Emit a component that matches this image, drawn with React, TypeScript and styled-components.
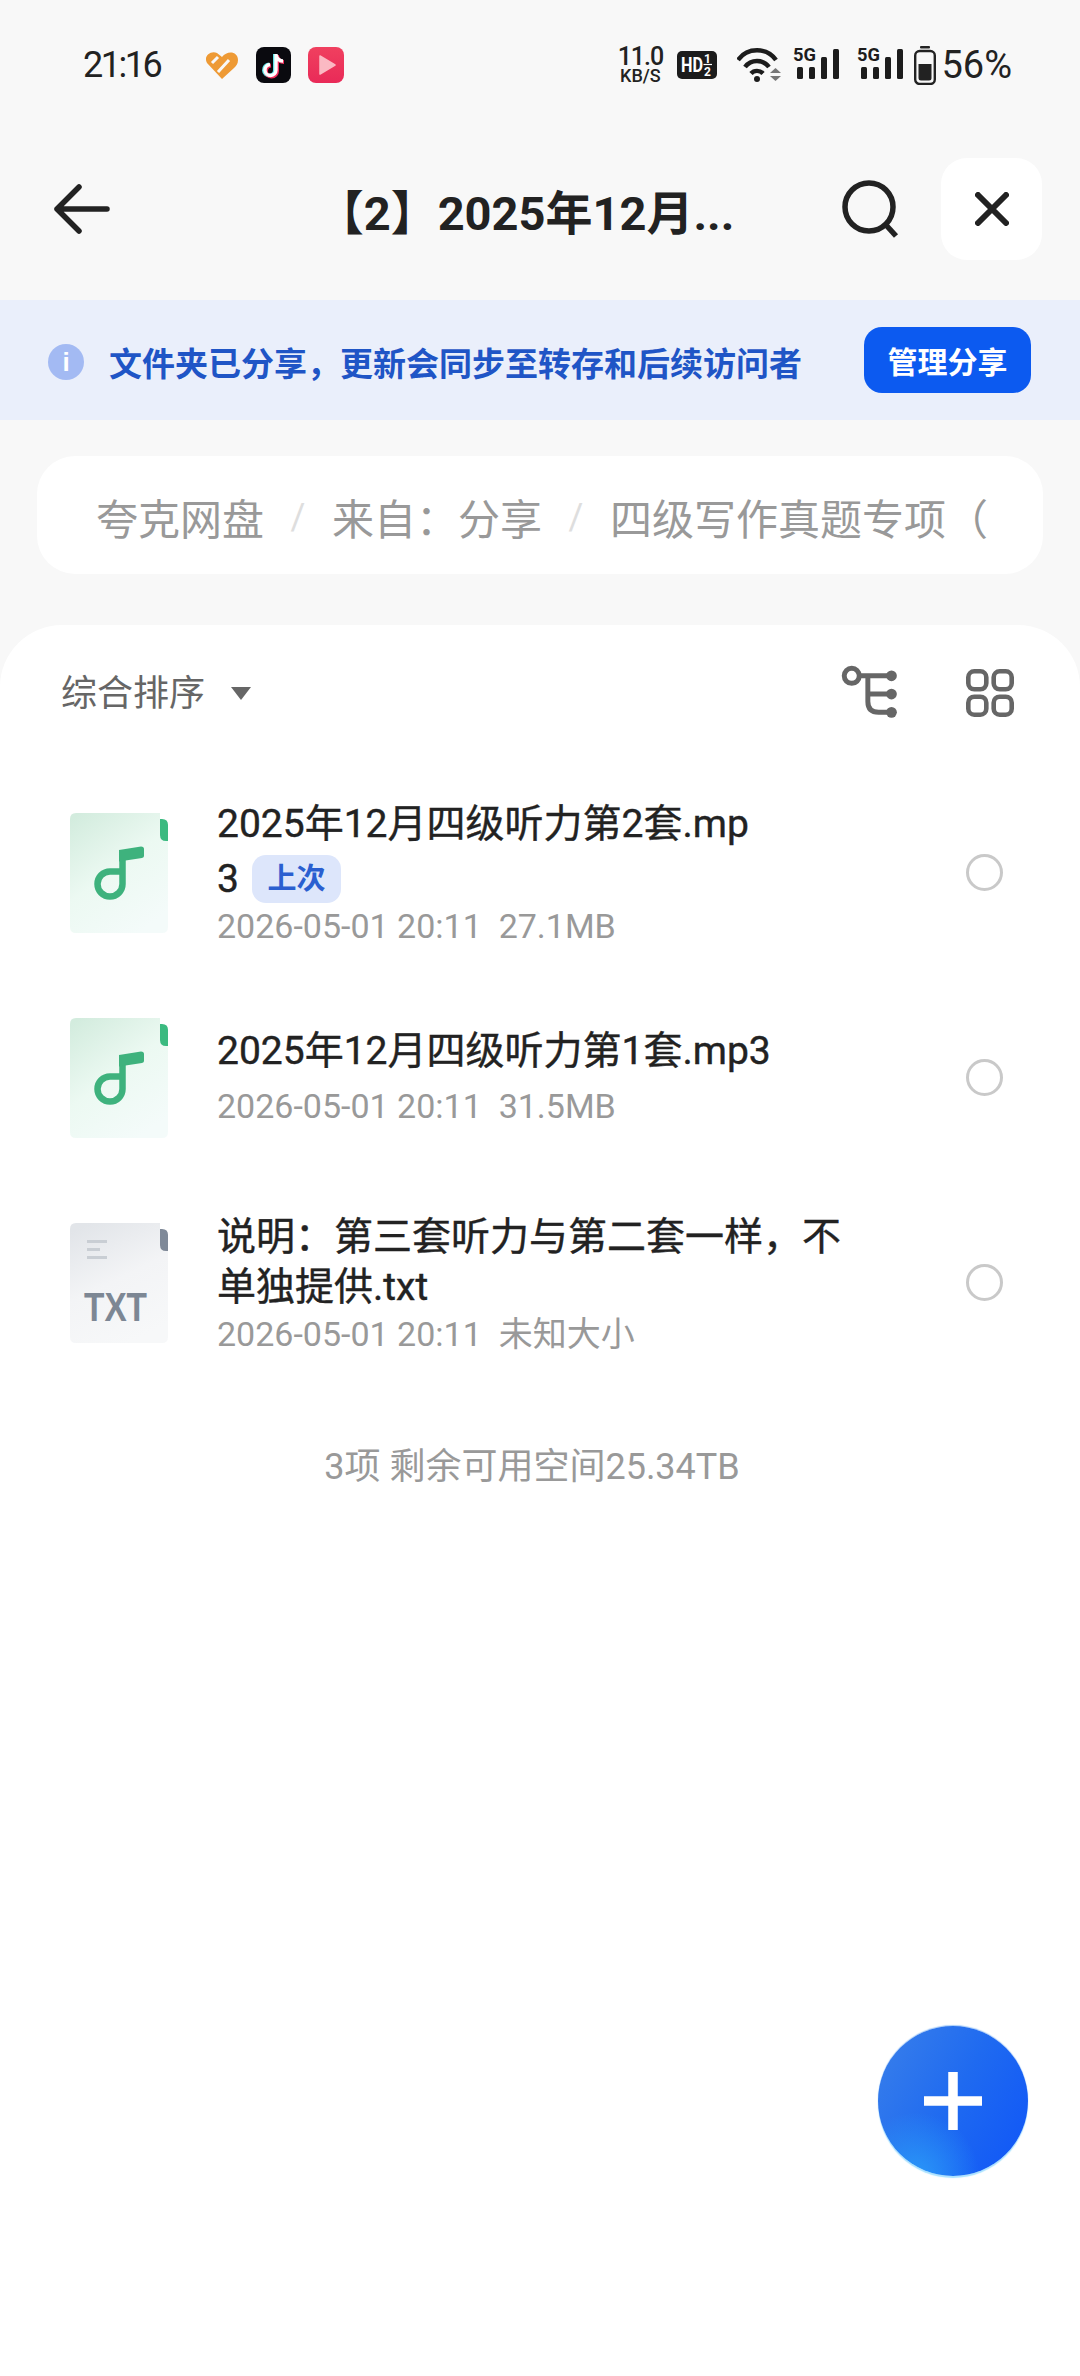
import React from 'react';
import styled, { createGlobalStyle } from 'styled-components';

const GlobalStyle = createGlobalStyle`
  html, body {
    margin: 0;
    padding: 0;
    background: #f8f8f8;
  }
  * {
    box-sizing: border-box;
  }
`;

const Page = styled.div`
  position: relative;
  width: 1080px;
  height: 2376px;
  overflow: hidden;
  display: flex;
  flex-direction: column;
  background: #f8f8f8;
  font-family: Roboto, 'Noto Sans CJK SC', sans-serif;
  color: #222;
`;

const StatusBar = styled.div`
  height: 130px;
  flex: none;
  display: flex;
  align-items: center;
  padding: 0 68px 0 83px;
`;

const Time = styled.span`
  width: 80px;
  font-size: 36px;
  letter-spacing: -2.5px;
  color: #222;
  white-space: nowrap;
`;

const AppIcons = styled.div`
  display: flex;
  align-items: center;
  margin-left: 42px;
  gap: 17px;
  flex: 1;
`;

const StatusItem = styled.div<{ $gap: number }>`
  display: flex;
  align-items: center;
  margin-left: ${(p) => p.$gap}px;
`;

const Speed = styled.div`
  width: 46px;
  display: flex;
  flex-direction: column;
  align-items: center;
  color: #222;
  font-weight: 500;
`;

const SpeedValue = styled.span`
  font-size: 25px;
  letter-spacing: -1px;
  line-height: 22px;
`;

const SpeedUnit = styled.span`
  font-size: 18px;
  line-height: 16px;
`;

const Battery = styled.span`
  font-size: 38px;
  color: #222;
`;

const Header = styled.div`
  height: 170px;
  flex: none;
  display: flex;
  align-items: center;
  padding: 0 38px 12px 52px;
`;

const BackButton = styled.div`
  width: 60px;
  display: flex;
`;

const Title = styled.h1`
  flex: 1;
  margin: 0;
  padding-left: 98px;
  text-align: center;
  font-size: 47px;
  font-weight: 700;
  color: #222;
  white-space: nowrap;
`;

const SearchButton = styled.div`
  display: flex;
  margin-right: 42px;
`;

const CloseButton = styled.div`
  width: 101px;
  height: 102px;
  border-radius: 26px;
  background: #fff;
  display: flex;
  align-items: center;
  justify-content: center;
`;

const Banner = styled.div`
  height: 120px;
  flex: none;
  display: flex;
  align-items: center;
  padding: 0 49px 0 48px;
  background: #eaeffb;
`;

const InfoDot = styled.div`
  width: 36px;
  height: 36px;
  border-radius: 50%;
  background: #a3baf3;
  color: #fff;
  display: flex;
  align-items: center;
  justify-content: center;
  font-size: 26px;
  font-weight: 700;
  font-family: 'Liberation Sans', sans-serif;
  margin-top: 4px;
`;

const BannerText = styled.span`
  flex: 1;
  margin: 4px 0 0 25px;
  font-size: 33px;
  font-weight: 700;
  color: #1f55c6;
  white-space: nowrap;
`;

const ManageButton = styled.button`
  width: 167px;
  height: 66px;
  border: none;
  border-radius: 18px;
  background: #0c5af0;
  color: #fff;
  font-family: inherit;
  font-size: 30px;
  font-weight: 700;
  padding: 0;
`;

const Breadcrumb = styled.div`
  height: 118px;
  flex: none;
  margin: 36px 37px 0 37px;
  border-radius: 38px;
  background: #fff;
  display: flex;
  align-items: center;
  padding: 3px 0 0 59px;
  font-size: 42px;
  color: #999;
  white-space: nowrap;
  overflow: hidden;
`;

const Crumb = styled.span``;

const CrumbSlash = styled.span`
  width: 68px;
  text-align: center;
  font-size: 36px;
  color: #dedede;
`;

const Sheet = styled.div`
  flex: 1;
  margin-top: 51px;
  background: #fff;
  border-radius: 62px 62px 0 0;
  display: flex;
  flex-direction: column;
`;

const Toolbar = styled.div`
  height: 145px;
  flex: none;
  display: flex;
  align-items: center;
  padding: 0 66px 9px 61px;
`;

const SortLabel = styled.span`
  margin-bottom: 6px;
  font-size: 36px;
  color: #666;
`;

const SortCaret = styled.span`
  width: 0;
  height: 0;
  margin: 1px 0 0 26px;
  border-style: solid;
  border-width: 13px 10px 0 10px;
  border-color: #666 transparent transparent transparent;
  flex: 1;
  max-width: 20px;
`;

const ToolbarIcons = styled.div`
  margin-left: auto;
  display: flex;
  align-items: center;
  gap: 67px;
`;

const FileRow = styled.div`
  height: 205px;
  flex: none;
  display: flex;
  align-items: center;
  padding: 0 77px 0 70px;
`;

const FileText = styled.div<{ $lift?: number }>`
  flex: 1;
  margin-left: 49px;
  padding-bottom: ${(p) => p.$lift ?? 0}px;
`;

const FileName = styled.div`
  font-size: 39px;
  -webkit-text-stroke: 0.4px #222;
  line-height: 50px;
  color: #222;
  white-space: nowrap;
`;

const NameLine = styled.div<{ $tall?: boolean }>`
  display: flex;
  align-items: center;
  height: ${(p) => (p.$tall ? 60 : 50)}px;
`;

const LastBadge = styled.span`
  width: 89px;
  height: 48px;
  margin-left: 13px;
  border-radius: 14px;
  background: #dde6fb;
  color: #2a5fd0;
  -webkit-text-stroke: 0;
  font-size: 29px;
  font-weight: 700;
  line-height: 48px;
  text-align: center;
`;

const FileMeta = styled.div<{ $gap: number }>`
  margin-top: ${(p) => p.$gap}px;
  font-size: 34px;
  line-height: 40px;
  color: #999;
  white-space: pre;
`;

const Radio = styled.div`
  width: 37px;
  height: 37px;
  flex: none;
  border-radius: 50%;
  border: 3px solid #c9c9c9;
`;

const Summary = styled.div`
  margin-top: 62px;
  padding-right: 16px;
  text-align: center;
  font-size: 36px;
  line-height: 40px;
  color: #999;
`;

const Fab = styled.div`
  position: absolute;
  left: 878px;
  top: 2026px;
  width: 150px;
  height: 150px;
  border-radius: 50%;
  background:
    radial-gradient(circle at 25% 100%, #2a98f8 0%, rgba(42, 152, 248, 0) 34%),
    linear-gradient(120deg, #3a80ea 0%, #1f6af0 50%, #0f55f8 100%);
  box-shadow: 0 2px 1px #a9e2ff, 0 -1px 1px #a8cdf8;
  display: flex;
  align-items: center;
  justify-content: center;
`;

const HeartIcon = () => (
  <svg width="34" height="30" viewBox="0 0 34 30">
    <path d="M17 29 L2 13 C-2 6 6 0 12 3 L17 7 C22 0 33 1 33 10 C33 14 31 16 29 18 Z" fill="#ee9a35" />
    <path d="M7 13 L13 7 M13 22 L24 10" stroke="#f8f8f8" strokeWidth="3" fill="none" />
  </svg>
);

const TikTokIcon = () => (
  <svg width="35" height="36" viewBox="0 0 35 36">
    <rect width="35" height="36" rx="8" fill="#0a0a0f" />
    <path d="M20 7 V23 A5.5 5.5 0 1 1 14 17.5 M20 8 C21 12 24 14 27 14" fill="none" stroke="#5fe6e8" strokeWidth="4" transform="translate(-1 0)" />
    <path d="M20 7 V23 A5.5 5.5 0 1 1 14 17.5 M20 8 C21 12 24 14 27 14" fill="none" stroke="#f0305c" strokeWidth="4" transform="translate(1 1)" />
    <path d="M20 7 V23 A5.5 5.5 0 1 1 14 17.5 M20 8 C21 12 24 14 27 14" fill="none" stroke="#fff" strokeWidth="3.4" />
  </svg>
);

const PlayIcon = () => (
  <svg width="36" height="36" viewBox="0 0 36 36">
    <defs>
      <linearGradient id="playBg" x1="0" y1="0" x2="0" y2="1">
        <stop offset="0" stopColor="#f0405f" />
        <stop offset="1" stopColor="#e92a58" />
      </linearGradient>
    </defs>
    <rect width="36" height="36" rx="8" fill="url(#playBg)" />
    <path d="M12 9 L27 18 L12 27 Z" fill="#fbb9c3" stroke="#fbb9c3" strokeWidth="1.5" strokeLinejoin="round" />
  </svg>
);

const HdIcon = () => (
  <svg width="40" height="28" viewBox="0 0 40 28">
    <rect width="40" height="28" rx="5" fill="#1c1c1c" />
    <text x="4" y="21" fontFamily="Roboto, sans-serif" fontWeight="700" fontSize="20" fill="#fff" textLength="22" lengthAdjust="spacingAndGlyphs">HD</text>
    <text x="27" y="12" fontFamily="Roboto, sans-serif" fontWeight="700" fontSize="12" fill="#fff">1</text>
    <text x="27" y="25" fontFamily="Roboto, sans-serif" fontWeight="700" fontSize="12" fill="#fff">2</text>
    <path d="M26.5 13.5 H35" stroke="#fff" strokeWidth="1.2" />
  </svg>
);

const WifiIcon = () => (
  <svg width="44" height="36" viewBox="0 0 44 36">
    <g fill="none" stroke="#1c1c1c" strokeWidth="4.4">
      <path d="M1 13 C10 0 30 0 39 13" />
      <path d="M8 20 C14 12 26 12 32 20" />
      <path d="M14 26.5 C17 23 23 23 26 26.5" />
    </g>
    <circle cx="20" cy="32" r="3" fill="#1c1c1c" />
    <path d="M33 26 L38.5 21 L44 26 Z" fill="#777" />
    <path d="M33 29 H44 L38.5 34 Z" fill="#777" />
  </svg>
);

const SignalIcon = () => (
  <svg width="47" height="46" viewBox="0 -4 47 46">
    <text x="0" y="15" fontFamily="Roboto, sans-serif" fontWeight="700" fontSize="19" fill="#1c1c1c" textLength="23" lengthAdjust="spacingAndGlyphs">5G</text>
    <rect x="4" y="21" width="6" height="12" rx="1.5" fill="#1c1c1c" />
    <rect x="16" y="21" width="6" height="12" rx="1.5" fill="#1c1c1c" />
    <rect x="28" y="11" width="6" height="22" rx="1.5" fill="#1c1c1c" />
    <rect x="40" y="3" width="6" height="30" rx="1.5" fill="#1c1c1c" />
  </svg>
);

const BatteryIcon = () => (
  <svg width="22" height="39" viewBox="0 0 22 39">
    <rect x="6" y="0" width="10" height="2.4" rx="1" fill="#222" />
    <rect x="1.2" y="5" width="19.6" height="33" rx="4.5" fill="none" stroke="#222" strokeWidth="2.4" />
    <path d="M4.5 18 H17.5 V32 a2.5 2.5 0 0 1 -2.5 2.5 H7 a2.5 2.5 0 0 1 -2.5 -2.5 Z" fill="#222" />
  </svg>
);

const BackIcon = () => (
  <svg width="58" height="50" viewBox="0 0 58 50">
    <path d="M27 3 L5 25 L27 47 M5 25 H55" fill="none" stroke="#222" strokeWidth="5.5" strokeLinecap="round" strokeLinejoin="round" />
  </svg>
);

const SearchIcon = () => (
  <svg width="58" height="58" viewBox="0 0 58 58">
    <circle cx="28" cy="27" r="24" fill="none" stroke="#222" strokeWidth="5.5" />
    <path d="M45 45 L55 56" stroke="#222" strokeWidth="5.5" />
  </svg>
);

const CloseIcon = () => (
  <svg width="34" height="34" viewBox="0 0 34 34">
    <path d="M3 3 L31 31 M31 3 L3 31" stroke="#222" strokeWidth="6" strokeLinecap="round" />
  </svg>
);

const TreeIcon = () => (
  <svg width="58" height="56" viewBox="0 0 54 52">
    <circle cx="10" cy="10" r="7" fill="none" stroke="#666" strokeWidth="4.6" />
    <path d="M17 10 H48 M25 10 V34 Q25 44 35 44 H48 M25 27 H48" fill="none" stroke="#666" strokeWidth="4.6" />
    <circle cx="47" cy="10" r="5" fill="#666" />
    <circle cx="47" cy="27" r="5" fill="#666" />
    <circle cx="47" cy="44" r="5" fill="#666" />
  </svg>
);

const GridIcon = () => (
  <svg width="48" height="48" viewBox="0 0 48 48">
    <g fill="none" stroke="#666" strokeWidth="4.6">
      <rect x="2.3" y="2.3" width="18" height="18" rx="6" />
      <rect x="27.7" y="2.3" width="18" height="18" rx="6" />
      <rect x="2.3" y="27.7" width="18" height="18" rx="6" />
      <rect x="27.7" y="27.7" width="18" height="18" rx="6" />
    </g>
  </svg>
);

const PlusIcon = () => (
  <svg width="58" height="58" viewBox="0 0 58 58">
    <path d="M29 0 V58 M0 29 H58" stroke="#fff" strokeWidth="9.5" />
  </svg>
);

const SHEET_PATH = 'M6 0 H90 V22 Q90 28 96 28 H98 V114 Q98 120 92 120 H6 Q0 120 0 114 V6 Q0 0 6 0 Z';

const MusicFileIcon: React.FC<{ id: string }> = ({ id }) => (
  <svg width="98" height="120" viewBox="0 0 98 120" style={{ flex: 'none' }}>
    <defs>
      <linearGradient id={id} x1="0.1" y1="0" x2="0.7" y2="1">
        <stop offset="0" stopColor="#d3ecde" />
        <stop offset="0.5" stopColor="#ecf9f2" />
        <stop offset="1" stopColor="#f4fbfa" />
      </linearGradient>
    </defs>
    <path d={SHEET_PATH} fill={`url(#${id})`} />
    <path d="M90 6 H92 Q98 6 98 12 V28 H96 Q90 28 90 22 Z" fill="#3bba80" />
    <path d="M52.5 40 V71 A12.5 12.5 0 1 1 40 58.5 H52.5" fill="none" stroke="#3eb27d" strokeWidth="6.5" strokeLinejoin="round" />
    <path d="M49 37 L71 33.5 Q74 33.5 74 36 V43 Q74 44.5 72 45 L49 48.5 Z" fill="#3eb27d" />
  </svg>
);

const TextFileIcon = () => (
  <svg width="98" height="120" viewBox="0 0 98 120" style={{ flex: 'none' }}>
    <defs>
      <linearGradient id="txtSheet" x1="0.2" y1="0" x2="0.6" y2="1">
        <stop offset="0" stopColor="#e2e5e9" />
        <stop offset="0.5" stopColor="#f3f4f6" />
        <stop offset="1" stopColor="#f7f8f9" />
      </linearGradient>
    </defs>
    <path d={SHEET_PATH} fill="url(#txtSheet)" />
    <path d="M90 6 H92 Q98 6 98 12 V28 H96 Q90 28 90 22 Z" fill="#7f8998" />
    <rect x="17" y="17" width="20" height="3" fill="#c9ced4" />
    <rect x="17" y="25" width="13" height="3" fill="#c9ced4" />
    <rect x="17" y="33" width="20" height="3" fill="#c9ced4" />
    <text x="14" y="98" fontFamily="'Liberation Sans', sans-serif" fontWeight="700" fontSize="40" fill="#7d8794" textLength="63" lengthAdjust="spacingAndGlyphs">TXT</text>
  </svg>
);

const App: React.FC = () => (
  <Page>
    <GlobalStyle />
    <StatusBar>
      <Time>21:16</Time>
      <AppIcons>
        <HeartIcon />
        <TikTokIcon />
        <PlayIcon />
      </AppIcons>
      <StatusItem $gap={0}>
        <Speed>
          <SpeedValue>11.0</SpeedValue>
          <SpeedUnit>KB/S</SpeedUnit>
        </Speed>
      </StatusItem>
      <StatusItem $gap={14}>
        <HdIcon />
      </StatusItem>
      <StatusItem $gap={20}>
        <WifiIcon />
      </StatusItem>
      <StatusItem $gap={12}>
        <SignalIcon />
      </StatusItem>
      <StatusItem $gap={17}>
        <SignalIcon />
      </StatusItem>
      <StatusItem $gap={10}>
        <BatteryIcon />
      </StatusItem>
      <StatusItem $gap={5}>
        <Battery>56%</Battery>
      </StatusItem>
    </StatusBar>

    <Header>
      <BackButton>
        <BackIcon />
      </BackButton>
      <Title>【2】2025年12月...</Title>
      <SearchButton>
        <SearchIcon />
      </SearchButton>
      <CloseButton>
        <CloseIcon />
      </CloseButton>
    </Header>

    <Banner>
      <InfoDot>i</InfoDot>
      <BannerText>文件夹已分享，更新会同步至转存和后续访问者</BannerText>
      <ManageButton>管理分享</ManageButton>
    </Banner>

    <Breadcrumb>
      <Crumb>夸克网盘</Crumb>
      <CrumbSlash>/</CrumbSlash>
      <Crumb>来自：分享</Crumb>
      <CrumbSlash>/</CrumbSlash>
      <Crumb>四级写作真题专项（</Crumb>
    </Breadcrumb>

    <Sheet>
      <Toolbar>
        <SortLabel>综合排序</SortLabel>
        <SortCaret />
        <ToolbarIcons>
          <TreeIcon />
          <GridIcon />
        </ToolbarIcons>
      </Toolbar>

      <FileRow>
        <MusicFileIcon id="musicSheetA" />
        <FileText>
          <FileName>
            <NameLine>2025年12月四级听力第2套.mp</NameLine>
            <NameLine $tall>
              3<LastBadge>上次</LastBadge>
            </NameLine>
          </FileName>
          <FileMeta $gap={-3}>2026-05-01 20:11  27.1MB</FileMeta>
        </FileText>
        <Radio />
      </FileRow>

      <FileRow>
        <MusicFileIcon id="musicSheetB" />
        <FileText $lift={4}>
          <FileName>
            <NameLine>2025年12月四级听力第1套.mp3</NameLine>
          </FileName>
          <FileMeta $gap={10}>2026-05-01 20:11  31.5MB</FileMeta>
        </FileText>
        <Radio />
      </FileRow>

      <FileRow>
        <TextFileIcon />
        <FileText>
          <FileName>
            <NameLine>说明：第三套听力与第二套一样，不</NameLine>
            <NameLine>单独提供.txt</NameLine>
          </FileName>
          <FileMeta $gap={2}>2026-05-01 20:11  未知大小</FileMeta>
        </FileText>
        <Radio />
      </FileRow>

      <Summary>3项 剩余可用空间25.34TB</Summary>
    </Sheet>

    <Fab>
      <PlusIcon />
    </Fab>
  </Page>
);

export default App;
